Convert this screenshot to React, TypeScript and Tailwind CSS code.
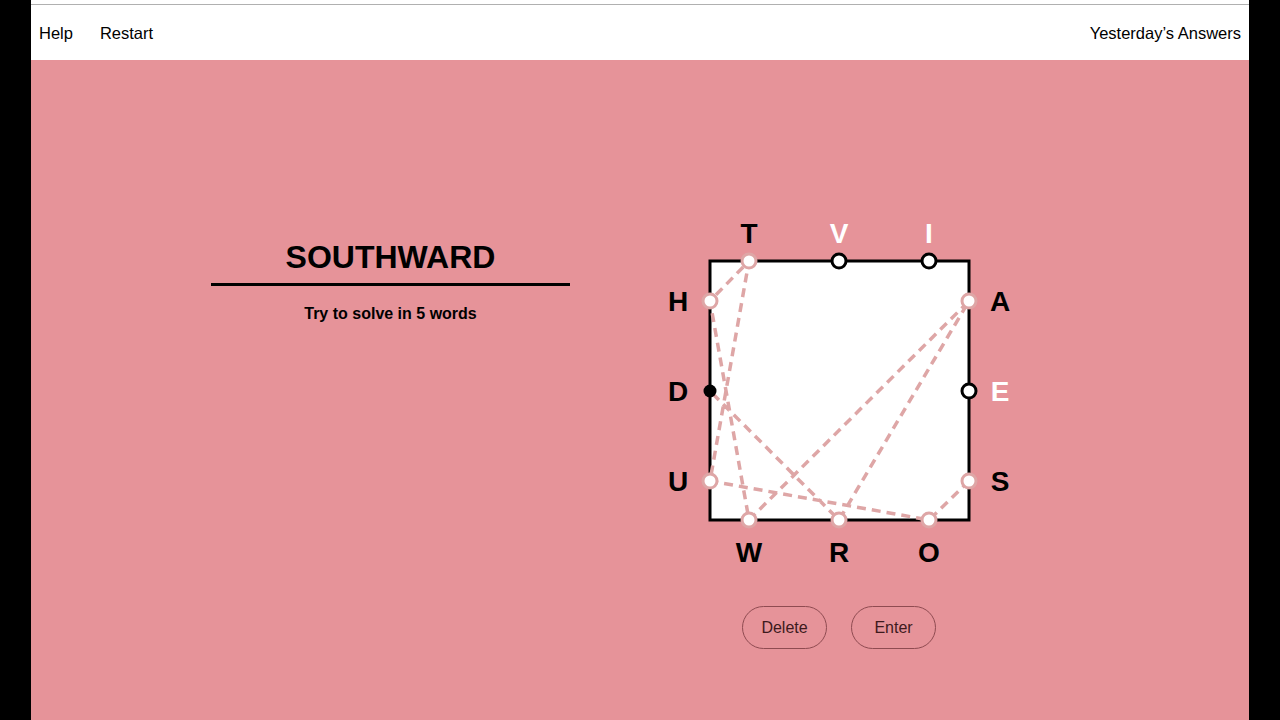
import React from 'react';

type Pt = { ch: string; x: number; y: number; lx: number; ly: number };

// board points, svg coords (svg sits at page x 659, y 200)
const points: Pt[] = [
  { ch: 'T', x: 90, y: 61, lx: 90, ly: 43 },
  { ch: 'V', x: 180, y: 61, lx: 180, ly: 43 },
  { ch: 'I', x: 270, y: 61, lx: 270, ly: 43 },
  { ch: 'H', x: 51, y: 101, lx: 19, ly: 111 },
  { ch: 'D', x: 51, y: 191, lx: 19, ly: 201 },
  { ch: 'U', x: 51, y: 281, lx: 19, ly: 291 },
  { ch: 'A', x: 310, y: 101, lx: 341, ly: 111 },
  { ch: 'E', x: 310, y: 191, lx: 341, ly: 201 },
  { ch: 'S', x: 310, y: 281, lx: 341, ly: 291 },
  { ch: 'W', x: 90, y: 320, lx: 90, ly: 362 },
  { ch: 'R', x: 180, y: 320, lx: 180, ly: 362 },
  { ch: 'O', x: 270, y: 320, lx: 270, ly: 362 },
];

const word = 'SOUTHWARD';
const current = 'D';
const lineColor = '#dea6a6';

const find = (c: string) => points.find((p) => p.ch === c)!;

const Board = () => {
  const path = word.split('').map(find);
  const d = path.map((p, i) => `${i === 0 ? 'M' : 'L'}${p.x} ${p.y}`).join(' ');

  return (
    <svg width="360" height="370" viewBox="0 0 360 370">
      <rect x="51" y="61" width="259" height="259" fill="#fff" stroke="#000" strokeWidth="3" />
      <path
        d={d}
        fill="none"
        stroke={lineColor}
        strokeWidth="3.5"
        strokeDasharray="9 6"
        strokeLinejoin="round"
      />
      {points.map((p) => {
        const used = word.includes(p.ch);
        return (
          <g key={p.ch}>
            {p.ch === current ? (
              <circle cx={p.x} cy={p.y} r="6.5" fill="#000" />
            ) : used ? (
              <circle cx={p.x} cy={p.y} r="7" fill="#fff" stroke={lineColor} strokeWidth="3" />
            ) : (
              <circle cx={p.x} cy={p.y} r="7" fill="#fff" stroke="#000" strokeWidth="3" />
            )}
            <text
              x={p.lx}
              y={p.ly}
              textAnchor="middle"
              fontSize="28"
              fontWeight="700"
              fontFamily="'Liberation Sans', Arial, sans-serif"
              fill={used ? '#000' : '#fff'}
            >
              {p.ch}
            </text>
          </g>
        );
      })}
    </svg>
  );
};

export default function App() {
  return (
    <div className="h-screen w-full bg-black flex justify-center overflow-hidden font-['Liberation_Sans',Arial,sans-serif]">
      <div className="w-[1218px] h-full bg-[#e69399] flex flex-col">
        {/* Header */}
        <div className="bg-white pt-[4px]">
          <div className="h-[56px] pt-[1px] border-t border-[#b0b0b0] flex items-center justify-between pl-[8px] pr-[8px] text-[16.5px] text-black">
            <div className="flex items-center gap-[27px]">
              <button>Help</button>
              <button>Restart</button>
            </div>
            <button>Yesterday’s Answers</button>
          </div>
        </div>

        {/* Game */}
        <div className="flex items-start pl-[180px]">
          <div className="w-[359px] mt-[179px] flex flex-col items-center">
            <div className="text-[32px] leading-[36px] font-bold text-black">SOUTHWARD</div>
            <div className="w-full h-[3px] bg-black mt-[8px]" />
            <div className="text-[16px] leading-[20px] font-bold text-black mt-[18px]">Try to solve in 5 words</div>
          </div>

          <div className="w-[360px] ml-[89px] mt-[140px] flex flex-col items-center">
            <Board />
            <div className="mt-[36px] flex gap-[24px]">
              <button className="w-[85px] h-[43px] rounded-full border border-[#8f4b51] text-[16px] text-[#3d1a1d]">
                Delete
              </button>
              <button className="w-[85px] h-[43px] rounded-full border border-[#8f4b51] text-[16px] text-[#3d1a1d]">
                Enter
              </button>
            </div>
          </div>
        </div>
      </div>
    </div>
  );
}
